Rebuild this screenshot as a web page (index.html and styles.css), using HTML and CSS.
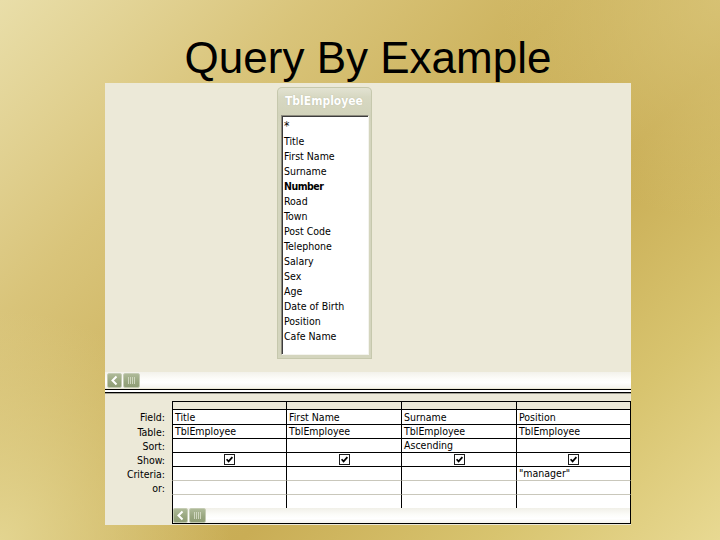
FILE: index.html
```html
<!DOCTYPE html>
<html>
<head>
<meta charset="utf-8">
<link rel="stylesheet" href="styles.css">
</head>
<body>
<div class="slide">
  <h1 class="title">Query By Example</h1>
  <div class="qbe">
    <div class="canvas">
      <div class="tablebox">
        <div class="tb-head">TblEmployee</div>
        <ul class="fields">
          <li class="star">*</li>
          <li>Title</li>
          <li>First Name</li>
          <li>Surname</li>
          <li class="key">Number</li>
          <li>Road</li>
          <li>Town</li>
          <li>Post Code</li>
          <li>Telephone</li>
          <li>Salary</li>
          <li>Sex</li>
          <li>Age</li>
          <li>Date of Birth</li>
          <li>Position</li>
          <li>Cafe Name</li>
        </ul>
      </div>
    </div>
    <div class="hscroll">
      <span class="sbtn"><svg width="9" height="11" viewBox="0 0 9 11"><path d="M6.5 1.5 L2.5 5.5 L6.5 9.5" fill="none" stroke="#fff" stroke-width="2"/></svg></span>
      <span class="sbtn thumb"><span class="grip"></span></span>
    </div>
    <div class="splitter"></div>
    <div class="splitline"></div>
    <div class="lower">
      <div class="qgrid">
        <div class="row r-head"><div class="lab"></div><div class="c"></div><div class="c"></div><div class="c"></div><div class="c last"></div></div>
        <div class="row r-field"><div class="lab">Field:</div><div class="c">Title</div><div class="c">First Name</div><div class="c">Surname</div><div class="c last">Position</div></div>
        <div class="row r-std"><div class="lab">Table:</div><div class="c">TblEmployee</div><div class="c">TblEmployee</div><div class="c">TblEmployee</div><div class="c last">TblEmployee</div></div>
        <div class="row r-std"><div class="lab">Sort:</div><div class="c"></div><div class="c"></div><div class="c">Ascending</div><div class="c last"></div></div>
        <div class="row r-std"><div class="lab">Show:</div>
          <div class="c chk"><svg width="11" height="11" viewBox="0 0 11 11"><rect x="0.5" y="0.5" width="10" height="10" fill="#fff" stroke="#1a1a1a"/><path d="M2.6 5.2 L4.6 7.4 L8.4 3.1" fill="none" stroke="#000" stroke-width="1.7"/></svg></div>
          <div class="c chk"><svg width="11" height="11" viewBox="0 0 11 11"><rect x="0.5" y="0.5" width="10" height="10" fill="#fff" stroke="#1a1a1a"/><path d="M2.6 5.2 L4.6 7.4 L8.4 3.1" fill="none" stroke="#000" stroke-width="1.7"/></svg></div>
          <div class="c chk"><svg width="11" height="11" viewBox="0 0 11 11"><rect x="0.5" y="0.5" width="10" height="10" fill="#fff" stroke="#1a1a1a"/><path d="M2.6 5.2 L4.6 7.4 L8.4 3.1" fill="none" stroke="#000" stroke-width="1.7"/></svg></div>
          <div class="c chk last"><svg width="11" height="11" viewBox="0 0 11 11"><rect x="0.5" y="0.5" width="10" height="10" fill="#fff" stroke="#1a1a1a"/><path d="M2.6 5.2 L4.6 7.4 L8.4 3.1" fill="none" stroke="#000" stroke-width="1.7"/></svg></div>
        </div>
        <div class="row r-soft"><div class="lab">Criteria:</div><div class="c"></div><div class="c"></div><div class="c"></div><div class="c last">"manager"</div></div>
        <div class="row r-soft"><div class="lab">or:</div><div class="c"></div><div class="c"></div><div class="c"></div><div class="c last"></div></div>
        <div class="row r-blank"><div class="lab"></div><div class="c"></div><div class="c"></div><div class="c"></div><div class="c last"></div></div>
        <div class="row r-scroll"><div class="lab"></div>
          <div class="gscroll">
            <span class="sbtn"><svg width="9" height="11" viewBox="0 0 9 11"><path d="M6.5 1.5 L2.5 5.5 L6.5 9.5" fill="none" stroke="#fff" stroke-width="2"/></svg></span>
            <span class="sbtn thumb"><span class="grip"></span></span>
          </div>
        </div>
      </div>
    </div>
  </div>
</div>
</body>
</html>
```
FILE: styles.css
```css
body {
  margin: 0;
}

.slide {
  width: 720px;
  height: 540px;
  overflow: hidden;
  background:
    radial-gradient(circle at 0% 100%, rgba(228, 214, 146, 0.95) 0, rgba(228, 214, 146, 0) 230px),
    radial-gradient(circle at 100% 0%, rgba(218, 198, 122, 0.8) 0, rgba(218, 198, 122, 0) 220px),
    linear-gradient(135deg, #e9dea9 0%, #d9c47a 25%, #cdb35e 45%, #c9ad55 62%, #d8c46f 82%, #e8d992 100%);
  font-family: "Liberation Sans", Arial, sans-serif;
}

.title {
  margin: 0 0 0 105px;
  padding-top: 33px;
  width: 526px;
  height: 50px;
  line-height: 50px;
  font-size: 44px;
  font-weight: normal;
  text-align: center;
  color: #000;
}

.qbe {
  margin-left: 105px;
  width: 526px;
  height: 442px;
  background: #ece9d8;
  overflow: hidden;
  display: flex;
  flex-direction: column;
  font-family: "DejaVu Sans Condensed", "DejaVu Sans", sans-serif;
  font-size: 10.5px;
  color: #000;
}

.canvas {
  height: 289px;
  box-sizing: border-box;
  padding: 4px 0 0 172px;
  flex: none;
}

.tablebox {
  width: 95px;
  height: 272px;
  box-sizing: border-box;
  border-radius: 5px 5px 0 0;
  padding: 0 3px 4px 4px;
  background: linear-gradient(#e4e4d4 0px, #d7d8c2 10px, #d2d3bb 28px, #d4d5be 40px, #d4d5be 100%);
  box-shadow: inset 0 0 0 1px #c6c8ad;
  display: flex;
  flex-direction: column;
}

.tb-head {
  height: 28px;
  line-height: 28px;
  padding-left: 4px;
  color: #fff;
  font-family: "DejaVu Sans Condensed", "DejaVu Sans", sans-serif;
  font-weight: bold;
  font-size: 12px;
  white-space: nowrap;
  text-shadow: 0 0 1px rgba(150, 152, 128, 0.6);
  flex: none;
}

.fields {
  flex: 1;
  margin: 0;
  list-style: none;
  background: #fff;
  border: 1px solid;
  border-color: #8c8a7e #f4f4ee #f4f4ee #8c8a7e;
  box-shadow: inset 1px 1px 0 #3c3c3c;
  padding: 3px 0 0 2px;
  line-height: 15px;
}

.fields .star {
  font-size: 12px;
}

.fields .key {
  font-weight: bold;
  letter-spacing: -0.5px;
}

.hscroll {
  height: 16px;
  flex: none;
  display: flex;
  align-items: center;
  gap: 1px;
  padding-left: 2px;
  background: linear-gradient(#f3f2eb, #fdfdfa 45%, #ffffff 65%, #f5f4ef);
}

.sbtn {
  width: 15px;
  height: 15px;
  box-sizing: border-box;
  border: 1px solid #c5ccb4;
  border-radius: 2px;
  background: linear-gradient(#aeba98, #98a67f 60%, #8f9d76);
  display: flex;
  align-items: center;
  justify-content: center;
  flex: none;
}

.thumb {
  width: 17px;
}

.grip {
  width: 7px;
  height: 7px;
  background: repeating-linear-gradient(90deg, #cfd6bf 0 1px, transparent 1px 2px);
}

.splitter {
  flex: none;
  margin-top: 1px;
  height: 2px;
  background: #fff;
  border-top: 1px solid #000;
  border-bottom: 1px solid #000;
}

.splitline {
  flex: none;
  height: 1px;
  background: #a19f92;
}

.lower {
  flex: 1;
  padding-top: 7px;
}

.qgrid {
  display: grid;
  grid-template-columns: 67px 114px 115px 115px 115px;
  grid-template-rows: 9px 15px 14px 14px 14px 14px 14px 13px 16px;
}

.row {
  display: contents;
}

.lab {
  text-align: right;
  padding-right: 7px;
  line-height: 14px;
  white-space: nowrap;
}

.c {
  box-sizing: border-box;
  background: #fff;
  border-left: 1px solid #000;
  border-bottom: 1px solid #000;
  padding-left: 2px;
  line-height: 13px;
  white-space: nowrap;
  overflow: hidden;
}

.c.last {
  border-right: 1px solid #000;
}

.r-head .c {
  background: #ece9d8;
  border-top: 1px solid #000;
}

.r-field .c {
  line-height: 14px;
}

.r-field .lab {
  line-height: 15px;
}

.r-soft .c {
  border-bottom-color: #c9c7bb;
}

.r-blank .c {
  border-bottom: none;
}

.chk {
  display: flex;
  align-items: center;
  justify-content: center;
  padding-left: 0;
}

.gscroll {
  grid-column: 2 / 6;
  box-sizing: border-box;
  border-left: 1px solid #000;
  border-right: 1px solid #000;
  border-bottom: 1px solid #000;
  display: flex;
  align-items: center;
  gap: 1px;
  padding-left: 0;
  background: linear-gradient(#f1f0e8, #fcfcf9 45%, #ffffff 70%, #f4f3ee);
}
```
